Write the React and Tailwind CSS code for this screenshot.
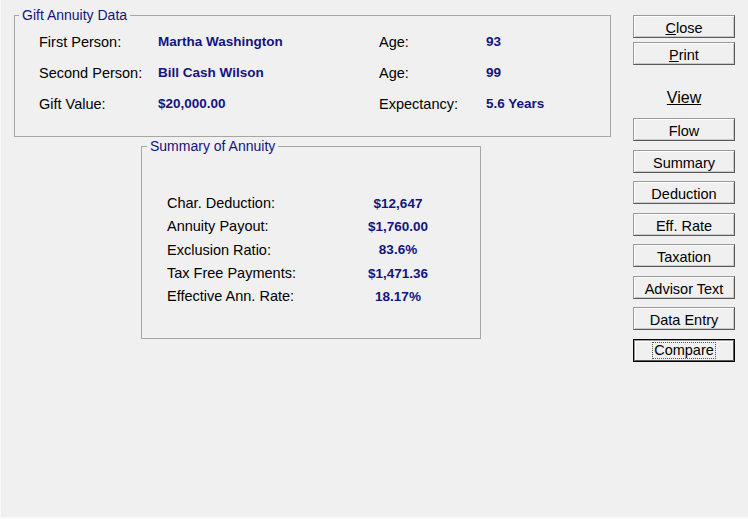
import React from 'react';

const font = { fontFamily: '"Liberation Sans", Arial, sans-serif' };

const ActionButton = ({ children, isDefault }) => (
  <button
    className={
      isDefault
        ? 'w-[102px] h-[23px] border border-black bg-[#f0f0f0] p-0'
        : 'w-[102px] h-[23px] border border-[#9a9a9a] border-r-[#5a5a5a] border-b-[#5a5a5a] bg-[#f0f0f0] shadow-[inset_1px_1px_0_#ffffff,inset_-1px_-1px_0_#c8c8c8] p-0'
    }
  >
    {isDefault ? (
      <span className="flex h-full w-full items-center justify-center border border-[#9a9a9a] border-r-[#5a5a5a] border-b-[#5a5a5a] shadow-[inset_1px_1px_0_#ffffff]">
        <span className="border border-dotted border-[#555] px-[1px] leading-[15px] text-[14.5px] text-black">
          {children}
        </span>
      </span>
    ) : (
      <span className="text-[14.5px] leading-[16px] text-black">{children}</span>
    )}
  </button>
);

const DataRow = ({ label, value, label2, value2 }) => (
  <div className="grid h-[31px] grid-cols-[119px_221px_107px_1fr] items-center">
    <span className="text-[14.5px] text-black">{label}</span>
    <span className="text-[13.5px] font-bold text-[#14147e]">{value}</span>
    <span className="text-[14.5px] text-black">{label2}</span>
    <span className="text-[13.5px] font-bold text-[#14147e]">{value2}</span>
  </div>
);

const SummaryRow = ({ label, value }) => (
  <div className="grid h-[23.4px] grid-cols-[176px_110px] items-center">
    <span className="text-[14.5px] text-black">{label}</span>
    <span className="text-center text-[13.5px] font-bold text-[#14147e]">{value}</span>
  </div>
);

export default function App() {
  return (
    <div
      className="flex h-[519px] w-[748px] bg-[#f0f0f0] shadow-[inset_1px_0_0_#fafafa,inset_0_-2px_0_#fafafa]"
      style={font}
    >
      {/* Left: data panels */}
      <div className="flex w-[633px] flex-col pl-[14px] pt-[7px]">
        <fieldset className="w-[597px] border border-[#a6a6a6] pl-[24px] pr-2 pt-[4px] pb-[16px]">
          <legend className="ml-[-20px] px-[3px] text-[14px] leading-[16px] text-[#14147e]">
            Gift Annuity Data
          </legend>
          <DataRow label="First Person:" value="Martha Washington" label2="Age:" value2="93" />
          <DataRow label="Second Person:" value="Bill Cash Wilson" label2="Age:" value2="99" />
          <DataRow label="Gift Value:" value="$20,000.00" label2="Expectancy:" value2="5.6 Years" />
        </fieldset>

        <fieldset className="ml-[127px] mt-[1px] w-[340px] border border-[#a6a6a6] pl-[25px] pt-[38px] pb-[29px]">
          <legend className="ml-[-20px] px-[3px] text-[14px] leading-[16px] text-[#14147e]">
            Summary of Annuity
          </legend>
          <SummaryRow label="Char. Deduction:" value="$12,647" />
          <SummaryRow label="Annuity Payout:" value="$1,760.00" />
          <SummaryRow label="Exclusion Ratio:" value="83.6%" />
          <SummaryRow label="Tax Free Payments:" value="$1,471.36" />
          <SummaryRow label="Effective Ann. Rate:" value="18.17%" />
        </fieldset>
      </div>

      {/* Right: buttons */}
      <div className="flex w-[102px] flex-col pt-[15px]">
        <div className="flex flex-col gap-[4px]">
          <ActionButton>
            <span className="underline">C</span>lose
          </ActionButton>
          <ActionButton>
            <span className="underline">P</span>rint
          </ActionButton>
        </div>
        <div className="mt-[24px] h-[18px] text-center text-[16px] leading-[18px] text-black">
          <span className="underline">View</span>
        </div>
        <div className="mt-[11px] flex flex-col gap-[8.5px]">
          <ActionButton>Flow</ActionButton>
          <ActionButton>Summary</ActionButton>
          <ActionButton>Deduction</ActionButton>
          <ActionButton>Eff. Rate</ActionButton>
          <ActionButton>Taxation</ActionButton>
          <ActionButton>Advisor Text</ActionButton>
          <ActionButton>Data Entry</ActionButton>
          <ActionButton isDefault>Compare</ActionButton>
        </div>
      </div>
    </div>
  );
}
